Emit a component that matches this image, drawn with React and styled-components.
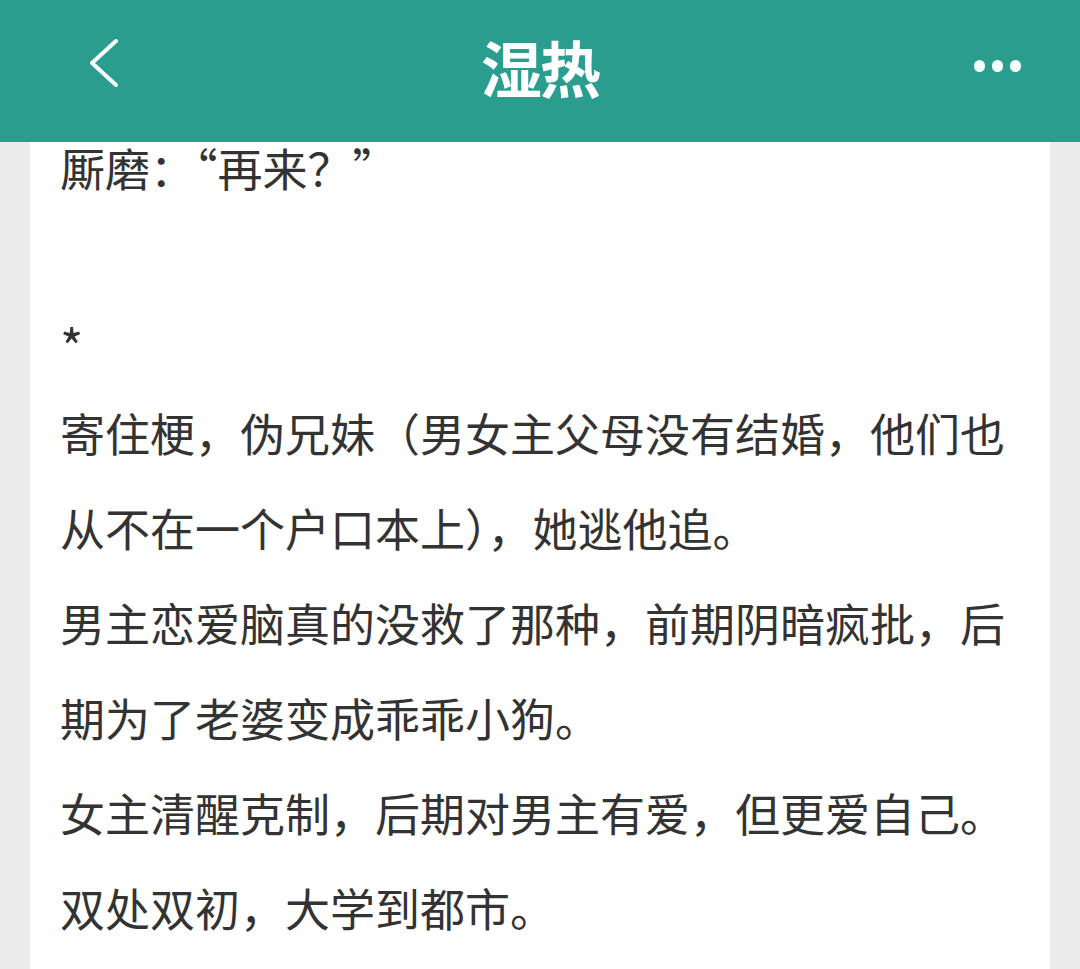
import React from 'react'
import styled, { createGlobalStyle } from 'styled-components'

const GlobalStyle = createGlobalStyle`
  html, body {
    margin: 0;
    padding: 0;
    background: #ececec;
  }
  body {
    font-family: "Noto Sans CJK SC", "Noto Sans", sans-serif;
  }
`

const Screen = styled.div`
  width: 1080px;
  height: 969px;
  overflow: hidden;
  display: flex;
  flex-direction: column;
  background: #ececec;
`

const TopBar = styled.header`
  flex: 0 0 142px;
  display: grid;
  grid-template-columns: 1fr auto 1fr;
  align-items: center;
  background: #2a9d8f;
  color: #fff;
  padding: 0 54px;
  box-sizing: border-box;
`

const BackButton = styled.button`
  justify-self: start;
  display: flex;
  align-items: center;
  justify-content: center;
  width: 36px;
  height: 50px;
  padding: 0;
  margin: -16px 0 0 32px;
  border: 0;
  background: none;
  color: inherit;
`

const Title = styled.h1`
  margin: -10px 0 0;
  font-size: 61px;
  font-weight: 700;
  letter-spacing: -2px;
  line-height: 1;
`

const MoreButton = styled.button`
  justify-self: end;
  display: flex;
  gap: 6.5px;
  padding: 0;
  margin: -10px 5px 0 0;
  border: 0;
  background: none;
`

const Dot = styled.span`
  width: 11.5px;
  height: 11.5px;
  border-radius: 50%;
  background: #f4fffd;
`

const Sheet = styled.main`
  flex: 1;
  margin: 0 30px;
  padding: 0 30px;
  background: #fff;
  overflow: hidden;
`

const Line = styled.p`
  margin: 0;
  font-size: 45px;
  line-height: ${p => p.$lh || 95}px;
  color: #333;
`

const Divider = styled.p`
  margin: 0;
  font-size: 50px;
  line-height: 80px;
  color: #333;
`

const Gap = styled.div`
  height: ${p => p.$h}px;
`

const Chevron = () => (
  <svg width="30" height="48" viewBox="0 0 30 48" fill="none">
    <path d="M27 2 L3 24 L27 46" stroke="currentColor" strokeWidth="4" strokeLinecap="round" strokeLinejoin="round" />
  </svg>
)

const lines = [
  '寄住梗，伪兄妹（男女主父母没有结婚，他们也',
  '从不在一个户口本上），她逃他追。',
  '男主恋爱脑真的没救了那种，前期阴暗疯批，后',
  '期为了老婆变成乖乖小狗。',
  '女主清醒克制，后期对男主有爱，但更爱自己。',
  '双处双初，大学到都市。',
]

export default function App() {
  return (
    <>
      <GlobalStyle />
      <Screen>
        <TopBar>
          <BackButton><Chevron /></BackButton>
          <Title>湿热</Title>
          <MoreButton>
            <Dot /><Dot /><Dot />
          </MoreButton>
        </TopBar>
        <Sheet>
          <Line $lh={51}>厮磨：“再来？”</Line>
          <Gap $h={112} />
          <Divider>*</Divider>
          {lines.map((t, i) => <Line key={i}>{t}</Line>)}
        </Sheet>
      </Screen>
    </>
  )
}
